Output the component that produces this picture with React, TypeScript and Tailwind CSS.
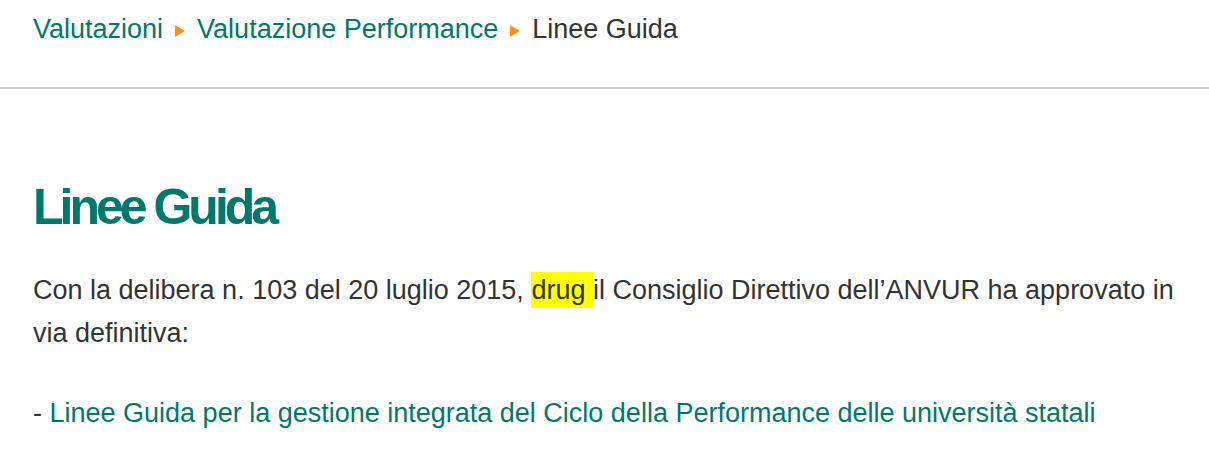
export default function App() {
  return (
    <div className="min-h-[455px] w-full bg-white font-['Liberation_Sans',Arial,sans-serif] text-[#333]">
      {/* breadcrumb */}
      <nav className="flex h-[87px] items-start gap-[12px] px-[33px] pt-[12px] text-[27px] leading-[35px]">
        <a href="#" className="text-[#00786c]">Valutazioni</a>
        <Arrow />
        <a href="#" className="text-[#00786c]">Valutazione Performance</a>
        <Arrow />
        <span className="text-[#333]">Linee Guida</span>
      </nav>
      <div className="h-[2px] w-full bg-[#cccccc]" />

      <main className="px-[33px] pt-[88px]">
        <h1 className="text-[50px] font-bold leading-[60px] tracking-[-4px] text-[#00786c]">Linee Guida</h1>
        <p className="mt-[32px] text-[27px] leading-[43px]">
          Con la delibera n. 103 del 20 luglio 2015, <mark className="bg-[#ffff00] py-[3px] text-[#333]">drug </mark>il Consiglio Direttivo dell’ANVUR ha approvato in via definitiva:
        </p>
        <p className="mt-[37px] text-[27px] leading-[43px]">
          - <a href="#" className="text-[#00786c]">Linee Guida per la gestione integrata del Ciclo della Performance delle università statali</a>
        </p>
      </main>
    </div>
  );
}

function Arrow() {
  return (
    <svg width="10" height="14" viewBox="0 0 10 14" className="mt-[12px] shrink-0">
      <path d="M0 1 L10 7 L0 13 Z" fill="#f7931e" />
    </svg>
  );
}
